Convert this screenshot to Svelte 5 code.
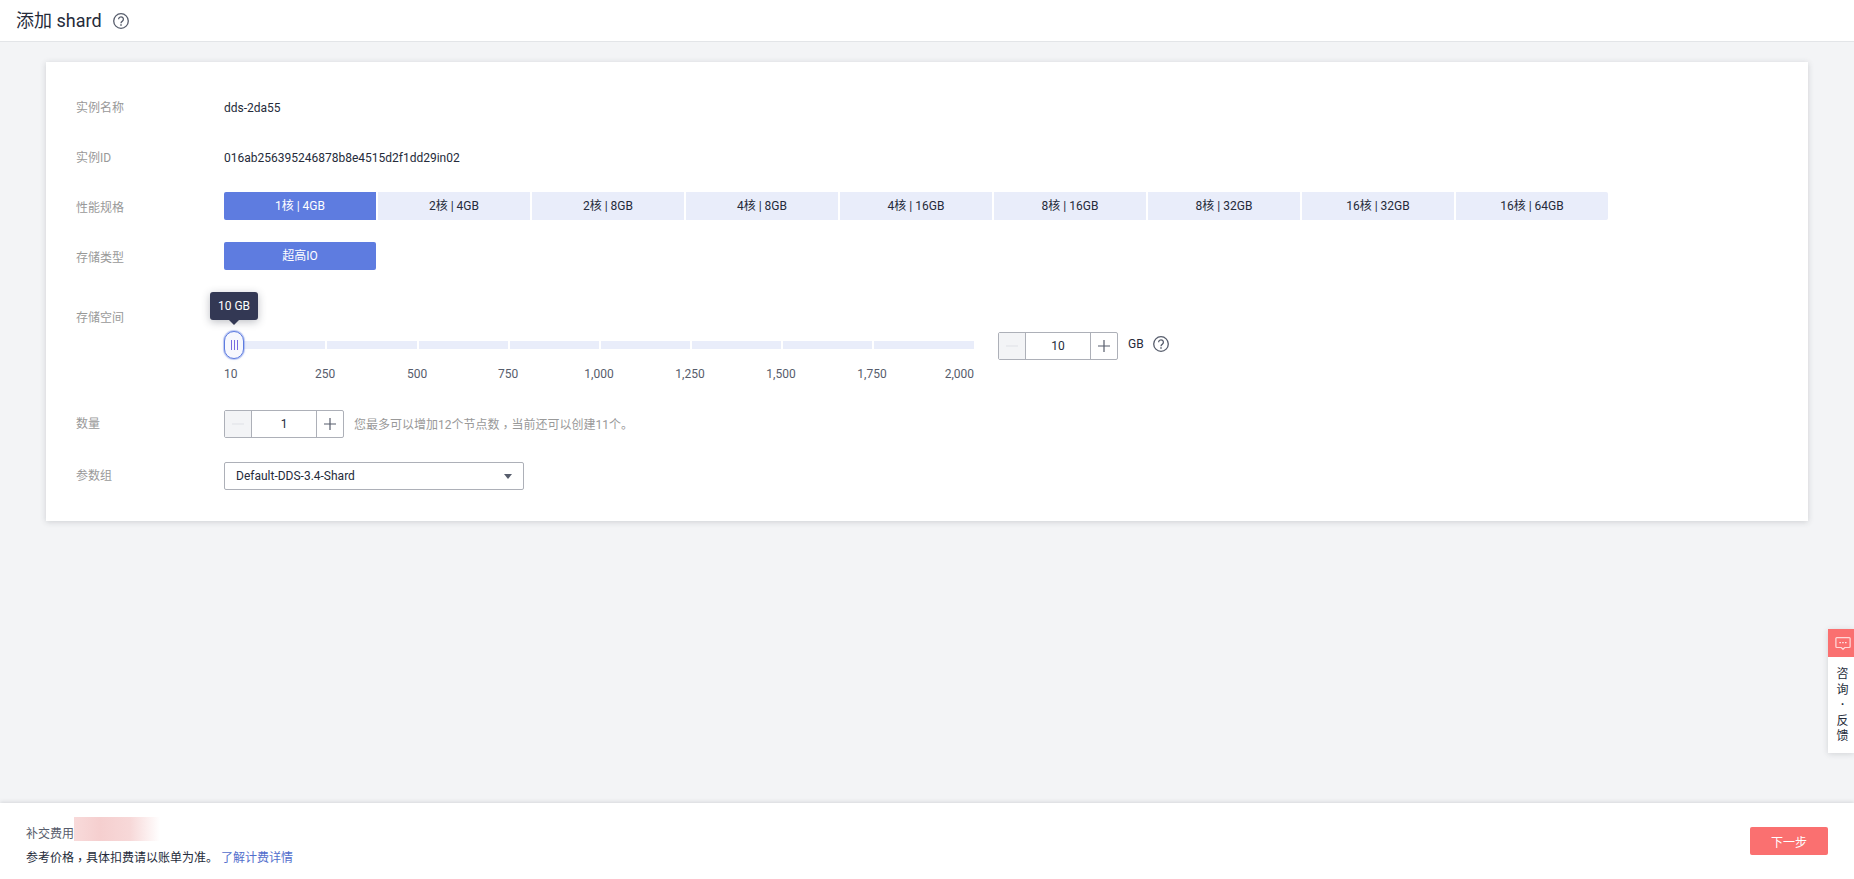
<script>
  const specs = ['1核 | 4GB','2核 | 4GB','2核 | 8GB','4核 | 8GB','4核 | 16GB','8核 | 16GB','8核 | 32GB','16核 | 32GB','16核 | 64GB'];
  const segs = [101,90,89,89,89,89,89,100];
  const ticks = [['10',0],['250',101],['500',92],['750',91],['1,000',91],['1,250',91],['1,500',91],['1,750',91],['2,000',102]];
</script>

{#snippet help(size)}
  <svg class="help" width={size} height={size} viewBox="0 0 16 16" fill="none" stroke="#575d6c" stroke-width="1.3">
    <circle cx="8" cy="8" r="7.3"/>
    <path d="M5.6 6.2a2.4 2.3 0 1 1 3.8 1.9c-1 .6-1.4 1-1.4 2.1"/>
    <path d="M8 11.2v1.5" stroke-width="1.5"/>
  </svg>
{/snippet}

{#snippet stepper(value, cls)}
  <div class="stepper {cls}">
    <span class="step minus"><svg width="12" height="12" viewBox="0 0 12 12"><path d="M0 6h12" stroke="#dfe1e6" stroke-width="1"/></svg></span>
    <span class="val">{value}</span>
    <span class="step plus"><svg width="12" height="12" viewBox="0 0 12 12"><path d="M0 6h12M6 0v12" stroke="#575d6c" stroke-width="1.2"/></svg></span>
  </div>
{/snippet}

<div class="page">
  <header class="head">
    <h1>添加 shard</h1>
    {@render help(16)}
  </header>

  <main class="main">
    <section class="card">
      <div class="row">
        <div class="label">实例名称</div>
        <div class="text">dds-2da55</div>
      </div>
      <div class="row">
        <div class="label">实例ID</div>
        <div class="text">016ab256395246878b8e4515d2f1dd29in02</div>
      </div>
      <div class="row">
        <div class="label">性能规格</div>
        <div class="opts">
          {#each specs as s, i}
            <div class="opt" class:on={i === 0}>{s}</div>
          {/each}
        </div>
      </div>
      <div class="row">
        <div class="label">存储类型</div>
        <div class="opts"><div class="opt on">超高IO</div></div>
      </div>
      <div class="row storage">
        <div class="label">存储空间</div>
        <div class="storage-body">
          <div class="slider">
            <div class="track">
              {#each segs as w}
                <span class="seg" style="width:{w}px"></span>
              {/each}
              <div class="thumb"><i></i><i></i><i></i></div>
              <div class="tip">10 GB</div>
            </div>
            <div class="ticks">
              {#each ticks as [t, off]}
                <span class="tick" style="margin-left:{off}px">{t}</span>
              {/each}
            </div>
          </div>
          {@render stepper('10', 'size')}
          <span class="unit">GB</span>
          {@render help(16)}
        </div>
      </div>
      <div class="row count">
        <div class="label">数量</div>
        {@render stepper('1', 'qty')}
        <span class="hint">您最多可以增加12个节点数<span class="cm">，</span>当前还可以创建11个。</span>
      </div>
      <div class="row group">
        <div class="label">参数组</div>
        <div class="select">
          <span>Default-DDS-3.4-Shard</span>
          <svg width="8" height="5" viewBox="0 0 8 5"><path d="M0 0h8L4 5z" fill="#575d6c"/></svg>
        </div>
      </div>
    </section>
  </main>

  <footer class="foot">
    <div class="fee">
      <div class="line1"><span>补交费用</span><span class="blur"></span></div>
      <div class="line2">参考价格<span class="cm">，</span>具体扣费请以账单为准。<span class="link">了解计费详情</span></div>
    </div>
    <button class="next">下一步</button>
  </footer>

  <aside class="feedback">
    <div class="fb-icon">
      <svg width="16" height="15" viewBox="0 0 18 16" fill="none">
        <path d="M2 1.5h14a1 1 0 0 1 1 1v9a1 1 0 0 1-1 1h-5L9 14.5 7 12.5H2a1 1 0 0 1-1-1v-9a1 1 0 0 1 1-1z" stroke="#ffd9d9" stroke-width="1.4"/>
        <path d="M5 7h1.5M8.2 7h1.5M11.4 7h1.5" stroke="#fff" stroke-width="1.5"/>
      </svg>
    </div>
    <div class="fb-text"><span>咨</span><span>询</span><span class="dot">·</span><span>反</span><span>馈</span></div>
  </aside>
</div>

<style>
  :global(body) { margin: 0; }
  .page {
    position: relative;
    display: flex;
    flex-direction: column;
    height: 879px;
    overflow: hidden;
    background: #f3f4f6;
    color: #252b3a;
    font-family: Roboto, "Noto Sans CJK SC", sans-serif;
    font-size: 12px;
  }
  .head {
    display: flex;
    align-items: center;
    gap: 11px;
    height: 41px;
    padding-left: 16px;
    background: #fff;
    border-bottom: 1px solid #e3e5e8;
    flex: none;
  }
  h1 { margin: 0; font-size: 18px; font-weight: 400; line-height: 41px; color: #252b3a; }
  .help { flex: none; display: block; }
  .main { flex: 1; padding: 20px 46px 0 46px; min-height: 0; }
  .card {
    background: #fff;
    box-shadow: 0 1px 6px rgba(37, 43, 58, .18);
    padding: 30px 30px 31px;
    display: flex;
    flex-direction: column;
    gap: 22px;
    height: 459px;
    box-sizing: border-box;
  }
  .row { display: flex; align-items: center; min-height: 28px; }
  .label { width: 148px; flex: none; color: #999; height: 28px; line-height: 32px; }
  .text { height: 28px; line-height: 32px; }
  .opts { display: flex; gap: 2px; }
  .opt {
    width: 152px;
    height: 28px;
    line-height: 28px;
    text-align: center;
    background: #e9edfa;
    color: #252b3a;
  }
  .opt:first-child { border-radius: 2px 0 0 2px; }
  .opt:last-child { border-radius: 0 2px 2px 0; }
  .opt.on { background: #5e7ce0; color: #fff; }
  .opts .opt:only-child { border-radius: 2px; }
  .storage { align-items: flex-start; height: 97px; }
  .storage .label { padding-top: 10px; }
  .storage-body { display: flex; align-items: flex-start; padding-top: 39px; }
  .slider { width: 750px; margin-right: 24px; }
  .track {
    position: relative;
    display: flex;
    gap: 2px;
    height: 28px;
    align-items: center;
  }
  .seg { height: 8px; background: #e9edfa; display: block; flex: none; }
  .thumb {
    position: absolute;
    left: 0;
    top: 0;
    box-sizing: border-box;
    width: 20px;
    height: 28px;
    border: 1px solid #5e7ce0;
    border-radius: 10px;
    background: #f7f8fe;
    box-shadow: 0 0 0 1px rgba(94, 124, 224, .3), 0 0 3px rgba(94, 124, 224, .35);
    display: flex;
    align-items: center;
    justify-content: center;
    gap: 2px;
  }
  .thumb i { display: block; width: 1px; height: 10px; background: #7a6be0; }
  .tip {
    position: absolute;
    left: -14px;
    top: -39px;
    width: 48px;
    height: 28px;
    line-height: 28px;
    text-align: center;
    color: #fff;
    background: #333854;
    border-radius: 3px;
    box-shadow: 0 2px 8px rgba(37, 43, 58, .3);
  }
  .tip::after {
    content: "";
    position: absolute;
    left: 19px;
    bottom: -5px;
    border: 5px solid transparent;
    border-bottom: 0;
    border-top-color: #333854;
  }
  .ticks {
    display: flex;
    color: #575d6c;
    margin-top: 8px;
    line-height: 15px;
  }
  .tick { width: 0; display: flex; justify-content: center; white-space: nowrap; }
  .tick:first-child { justify-content: flex-start; }
  .tick:last-child { justify-content: flex-end; }
  .stepper {
    display: flex;
    box-sizing: border-box;
    height: 28px;
    border: 1px solid #adb0b8;
    border-radius: 2px;
    flex: none;
    margin-top: 1px;
  }
  .step { width: 26px; display: flex; align-items: center; justify-content: center; flex: none; }
  .minus { background: #f3f4f6; border-right: 1px solid #adb0b8; }
  .plus { border-left: 1px solid #adb0b8; }
  .val { flex: 1; text-align: center; line-height: 26px; color: #252b3a; }
  .size { width: 120px; }
  .qty { width: 120px; margin-top: 0; }
  .unit { margin: 0 9px 0 10px; line-height: 26px; color: #252b3a; }
  .storage-body :global(.help) { margin-top: 5px; }
  .count { gap: 0; }
  .count .label, .group .label { line-height: 29px; }
  .group { margin-top: 2px; }
  .hint { margin-left: 10px; color: #999; }
  .cm { font-family: "Noto Sans CJK TC", sans-serif; vertical-align: -3px; line-height: 1; }
  .select {
    box-sizing: border-box;
    width: 300px;
    height: 28px;
    border: 1px solid #adb0b8;
    border-radius: 2px;
    display: flex;
    align-items: center;
    justify-content: space-between;
    padding: 0 11px 0 11px;
  }
  .foot {
    flex: none;
    height: 76px;
    box-sizing: border-box;
    background: #fff;
    box-shadow: 0 -1px 4px rgba(37, 43, 58, .14);
    display: flex;
    align-items: center;
    justify-content: space-between;
    padding: 0 26px 0 26px;
    position: relative;
  }
  .fee { display: flex; flex-direction: column; gap: 4px; margin-top: 10px; }
  .line1 { display: flex; align-items: center; color: #575d6c; line-height: 20px; height: 20px; }
  .blur {
    width: 86px;
    height: 24px;
    background: linear-gradient(90deg, #f8dada 0%, #f5cfcf 30%, #f7d8d8 65%, #fff 100%);
    margin-top: -10px;
  }
  .line2 { line-height: 20px; color: #252b3a; }
  .link { color: #526ecc; margin-left: 3px; }
  .next {
    width: 78px;
    height: 28px;
    border: 0;
    border-radius: 2px;
    background: #fa7070;
    color: #fff;
    font: inherit;
    padding: 0;
  }
  .feedback {
    position: absolute;
    right: 0;
    top: 629px;
    width: 26px;
    height: 124px;
    background: #fff;
    box-shadow: 0 1px 6px rgba(37, 43, 58, .16);
  }
  .fb-icon {
    height: 28px;
    background: #fa7070;
    display: flex;
    align-items: center;
    justify-content: center;
    padding-left: 3px;
  }
  .fb-text {
    display: flex;
    flex-direction: column;
    align-items: center;
    padding: 10px 0 0 3px;
    font-size: 12px;
    line-height: 15.5px;
    color: #252b3a;
  }
  .dot { font-weight: 700; }
</style>
